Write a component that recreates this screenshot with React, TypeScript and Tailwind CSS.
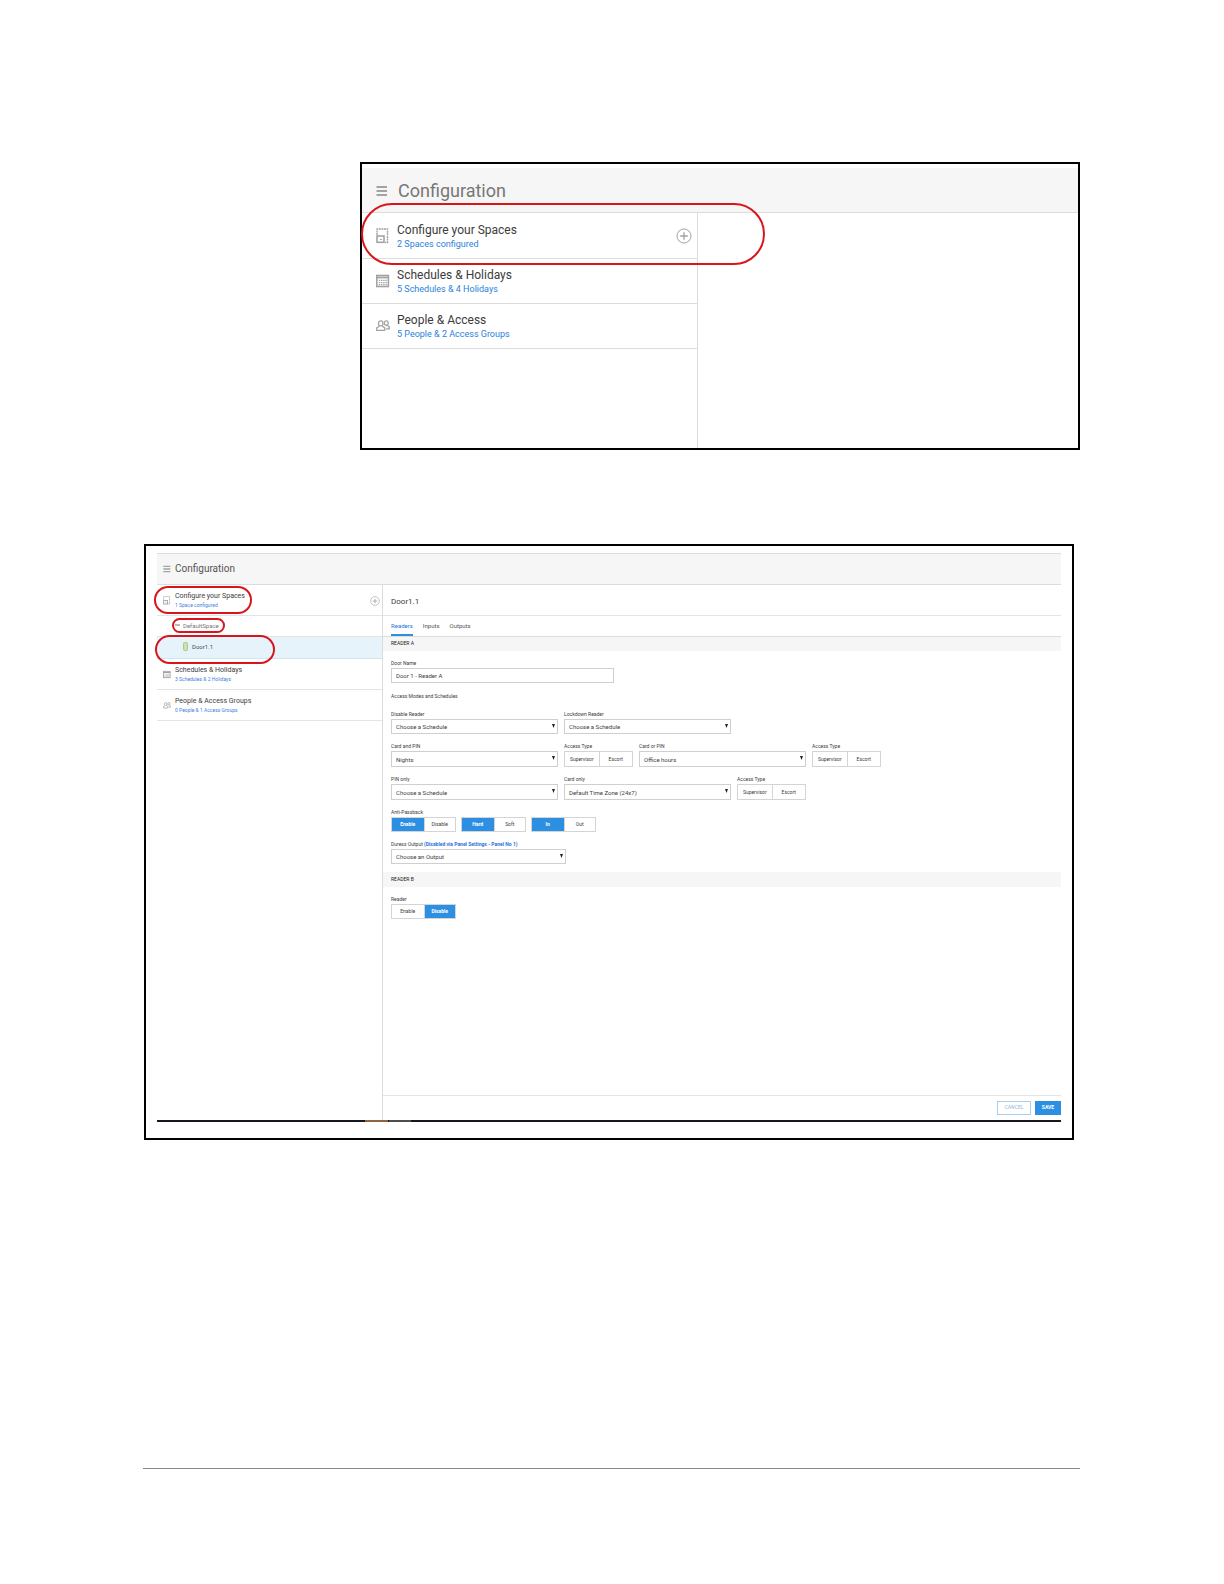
import type { ReactNode } from "react";
import clsx from "clsx";

const SPACES = [
  { title: "Configure your Spaces", detail: "2 Spaces configured", icon: "spaces" },
  { title: "Schedules & Holidays", detail: "5 Schedules & 4 Holidays", icon: "calendar" },
  { title: "People & Access", detail: "5 People & 2 Access Groups", icon: "people" },
];

function SectionIcon({ name, className }: { name: string; className: string }) {
  if (name === "spaces") {
    return (
      <svg viewBox="0 0 14 16" className={className} fill="none" stroke="currentColor" aria-hidden="true">
        <path d="M1 7V1H11.5V14.5H9" strokeDasharray="2 .6" strokeWidth="1.4" />
        <rect x="1" y="8" width="7" height="6.3" strokeWidth="1.6" />
        <path d="M4 11.5h2" />
      </svg>
    );
  }
  if (name === "calendar") {
    return (
      <svg viewBox="0 0 14 14" className={className} fill="none" stroke="currentColor" aria-hidden="true">
        <rect x=".8" y="1.5" width="11.6" height="11" strokeWidth="1.6" />
        <path d="M1 3.5h11.5" strokeWidth="1.8" />
        <path d="M2.8 6.4h8M2.8 8.6h8M2.8 10.6h8" strokeDasharray="1.4 .8" strokeWidth="1.2" />
      </svg>
    );
  }
  return (
    <svg viewBox="0 0 15 14" className={className} fill="none" stroke="currentColor" strokeWidth="1.4" aria-hidden="true">
      <rect x="2.8" y="1.6" width="4.6" height="5.2" rx="2" />
      <path d="M3.6 7.2.8 9v2.6h8.6V9L6.8 7.2" />
      <rect x="9" y="1.6" width="4" height="4.6" rx="1.8" />
      <path d="M12.2 6.4 14.2 8v2h-3.6" />
    </svg>
  );
}

function PlusIcon({ className }: { className: string }) {
  return (
    <svg viewBox="0 0 16 16" className={className} fill="none" stroke="currentColor" aria-hidden="true">
      <circle cx="8" cy="8" r="7" />
      <path d="M8 4.2v7.6M4.2 8h7.6" strokeWidth="1.3" />
    </svg>
  );
}

function MenuIcon({ className }: { className: string }) {
  return (
    <svg viewBox="0 0 12 12" className={className} stroke="currentColor" strokeWidth="2" aria-hidden="true">
      <path d="M.5 2h10.5M.5 6h10.5M.5 10h10.5" />
    </svg>
  );
}

// Red outline laid over the part of the screen that the step refers to
function Callout({ className }: { className: string }) {
  return (
    <span
      className={clsx("absolute rounded-full border-2 border-[#d8151b] pointer-events-none", className)}
      aria-hidden="true"
    />
  );
}

function OverviewFigure() {
  return (
    <figure className="ml-[217px] h-[288px] border-2 border-black pt-1 flex flex-col">
      <header className="h-[45px] shrink-0 bg-[#f6f6f6] border-b border-[#dcdcdc] flex items-center gap-2.5 pl-3.5 pt-0.5">
        <button type="button" aria-label="Menu" className="text-[#a3a3a3]">
          <MenuIcon className="size-3" />
        </button>
        <h1 className="text-[18px] leading-6 text-[#777]">Configuration</h1>
      </header>
      <div className="flex grow">
        <nav className="relative w-[336px] shrink-0 border-r border-[#dcdcdc] pt-px">
          <ul>
            {SPACES.map((item, i) => (
              <li
                key={item.title}
                className="h-[45px] border-b border-[#dcdcdc] flex items-center pl-3.5 pr-[5px]"
              >
                <SectionIcon name={item.icon} className="w-3.5 h-4 mr-[7px] text-[#a3a3a3]" />
                <a href="#" className="grow">
                  <span className="block text-[12px] leading-4 text-[#3c3c3c]">{item.title}</span>
                  <span className="block text-[9px] leading-3 text-[#2b82d9]">{item.detail}</span>
                </a>
                {i === 0 && (
                  <button type="button" aria-label="Add space" className="text-[#a3a3a3]">
                    <PlusIcon className="size-4" />
                  </button>
                )}
              </li>
            ))}
          </ul>
          <Callout className="-left-px -top-2.5 w-[404px] h-[62px]" />
        </nav>
      </div>
    </figure>
  );
}

function NavItem({ title, detail, icon, children }: { title: string; detail: string; icon: string; children?: ReactNode }) {
  return (
    <div className="relative h-[31px] border-b border-[#e4e4e4] flex items-center pl-1.5 pr-0.5 pt-px">
      <SectionIcon name={icon} className="w-2 h-[9px] mr-1 text-[#a3a3a3]" />
      <a href="#" className="grow">
        <span className="block text-[7px] leading-[10px] text-[#3c3c3c]">{title}</span>
        <span className="block text-[5px] leading-[9px] text-[#3f7fe0]">{detail}</span>
      </a>
      {children}
    </div>
  );
}

function Field({ id, label, children }: { id: string; label: ReactNode; children: ReactNode }) {
  return (
    <div>
      <label htmlFor={id} className="block text-[5px] leading-[10px] text-[#3c3c3c]">
        {label}
      </label>
      {children}
    </div>
  );
}

function SelectBox({ id, value, className }: { id: string; value: string; className: string }) {
  return (
    <div className={clsx("relative", className)}>
      <select
        id={id}
        className="block size-full appearance-none border border-[#cfcfcf] bg-white pl-1 pr-3 text-[6px] text-[#3c3c3c]"
      >
        <option>{value}</option>
      </select>
      <svg viewBox="0 0 3 4" className="absolute right-[3px] top-[5px] w-[3px] h-1 pointer-events-none" aria-hidden="true">
        <path d="M0 0h3L1.5 4z" fill="#222" />
      </svg>
    </div>
  );
}

function Toggle({ options, active, className }: { options: string[]; active?: string; className: string }) {
  return (
    <div className={clsx("flex border border-[#d4d4d4]", className)}>
      {options.map((option, i) => (
        <button
          key={option}
          type="button"
          aria-pressed={option === active}
          className={clsx(
            "grow basis-6 text-[5px] leading-none",
            option === active ? "bg-[#2d8fe2] text-white font-bold" : "text-[#3c3c3c]",
            option === "Supervisor" && "px-1",
            i > 0 && "border-l border-[#d4d4d4]"
          )}
        >
          {option}
        </button>
      ))}
    </div>
  );
}

function AccessType() {
  return (
    <div role="group" aria-label="Access Type">
      <p className="text-[5px] leading-[10px] text-[#3c3c3c]">Access Type</p>
      <Toggle options={["Supervisor", "Escort"]} className="w-[69px] h-4" />
    </div>
  );
}

function ReaderForm() {
  return (
    <form className="grow flex flex-col" onSubmit={(e) => e.preventDefault()}>
      <h3 className="h-3.5 bg-[#f6f6f6] pl-2 text-[5px] leading-[13px] text-[#222]">READER A</h3>
      <div className="pl-2 pt-[7px] pb-2 flex flex-col gap-[7px]">
        <Field id="door-name" label="Door Name">
          <input
            id="door-name"
            defaultValue="Door 1 - Reader A"
            className="block w-[223px] h-[15px] border border-[#cfcfcf] px-1 text-[6px] text-[#3c3c3c]"
          />
        </Field>
        <h4 className="text-[5px] leading-[12px] text-[#3c3c3c]">Access Modes and Schedules</h4>
        <div className="flex gap-1.5">
          <Field id="disable-reader" label="Disable Reader">
            <SelectBox id="disable-reader" value="Choose a Schedule" className="w-[167px] h-[15px]" />
          </Field>
          <Field id="lockdown-reader" label="Lockdown Reader">
            <SelectBox id="lockdown-reader" value="Choose a Schedule" className="w-[167px] h-[15px]" />
          </Field>
        </div>
        <div className="flex gap-1.5">
          <Field id="card-and-pin" label="Card and PIN">
            <SelectBox id="card-and-pin" value="Nights" className="w-[167px] h-4" />
          </Field>
          <AccessType />
          <Field id="card-or-pin" label="Card or PIN">
            <SelectBox id="card-or-pin" value="Office hours" className="w-[167px] h-4" />
          </Field>
          <AccessType />
        </div>
        <div className="flex gap-1.5">
          <Field id="pin-only" label="PIN only">
            <SelectBox id="pin-only" value="Choose a Schedule" className="w-[167px] h-4" />
          </Field>
          <Field id="card-only" label="Card only">
            <SelectBox id="card-only" value="Default Time Zone (24x7)" className="w-[167px] h-4" />
          </Field>
          <AccessType />
        </div>
        <div role="group" aria-label="Anti-Passback">
          <p className="text-[5px] leading-[10px] text-[#3c3c3c]">Anti-Passback</p>
          <div className="flex gap-[5px]">
            <Toggle options={["Enable", "Disable"]} active="Enable" className="w-[65px] h-[15px]" />
            <Toggle options={["Hard", "Soft"]} active="Hard" className="w-[65px] h-[15px]" />
            <Toggle options={["In", "Out"]} active="In" className="w-[65px] h-[15px]" />
          </div>
        </div>
        <Field
          id="duress-output"
          label={
            <>
              Duress Output <span className="text-[#2b72d9] font-bold">(Disabled via Panel Settings - Panel No 1)</span>
            </>
          }
        >
          <SelectBox id="duress-output" value="Choose an Output" className="w-[175px] h-[15px]" />
        </Field>
      </div>
      <h3 className="h-[15px] bg-[#f6f6f6] pl-2 text-[5px] leading-[14px] text-[#222]">READER B</h3>
      <div role="group" aria-label="Reader" className="grow pl-2 pt-[7px]">
        <p className="text-[5px] leading-[10px] text-[#3c3c3c]">Reader</p>
        <Toggle options={["Enable", "Disable"]} active="Disable" className="w-[65px] h-[15px]" />
      </div>
      <div className="h-[25px] border-t border-[#e4e4e4] flex items-start justify-end gap-1 pt-[5px]">
        <button type="button" className="w-[34px] h-3.5 border border-[#a9cdee] text-[5px] text-[#8fb9de]">
          CANCEL
        </button>
        <button type="submit" className="w-[26px] h-3.5 bg-[#2d8fe2] text-[5px] font-bold text-white">
          SAVE
        </button>
      </div>
    </form>
  );
}

function DoorFigure() {
  return (
    <figure className="mt-[94px] mr-1.5 ml-px h-[596px] border-2 border-black px-[11px] pt-[7px] pb-4 flex flex-col">
      <header className="h-8 shrink-0 bg-[#f6f6f6] border-y border-[#dcdcdc] flex items-center gap-1 pl-1.5">
        <button type="button" aria-label="Menu" className="text-[#a3a3a3]">
          <MenuIcon className="size-2" />
        </button>
        <h2 className="text-[10px] leading-4 text-[#555]">Configuration</h2>
      </header>
      <div className="grow flex">
        <nav className="w-[226px] shrink-0 border-r border-[#dcdcdc]">
          <NavItem title="Configure your Spaces" detail="1 Space configured" icon="spaces">
            <button type="button" aria-label="Add space" className="text-[#a3a3a3]">
              <PlusIcon className="size-2.5" />
            </button>
            <Callout className="-left-[3px] top-px w-[98px] h-7" />
          </NavItem>
          <div className="relative h-[21px] border-b border-[#e4e4e4] flex items-center gap-[3px] pl-[18px] pb-0.5 text-[6px] text-[#777]">
            <svg viewBox="0 0 5 2" className="w-[5px] h-0.5" aria-hidden="true">
              <path d="M0 1h5" stroke="#777" />
            </svg>
            <a href="#">DefaultSpace</a>
            <Callout className="left-[15px] top-0.5 w-[53px] h-[15px]" />
          </div>
          <div className="relative h-[22px] border-b border-[#cfe5f0] bg-[#e6f3fa] flex items-center gap-1 pl-[26px] pb-0.5 text-[6px] text-[#4a4a4a]">
            <svg viewBox="0 0 5 9" className="w-[5px] h-[9px]" fill="none" stroke="#a5cf88" aria-hidden="true">
              <rect x=".5" y=".5" width="4" height="8" rx="1" fill="#c5e0b0" />
              <path d="M2.5 2v5" stroke="#eadfb0" />
            </svg>
            <a href="#">Door1.1</a>
            <Callout className="-left-0.5 -top-0.5 w-[120px] h-[29px]" />
          </div>
          <NavItem title="Schedules & Holidays" detail="3 Schedules & 2 Holidays" icon="calendar" />
          <NavItem title="People & Access Groups" detail="0 People & 1 Access Groups" icon="people" />
        </nav>
        <section className="grow flex flex-col">
          <h2 className="h-[31px] border-b border-[#e4e4e4] pl-2 pt-2 text-[8px] leading-[18px] text-[#3c3c3c]">Door1.1</h2>
          <div className="h-[21px] shrink-0 border-b border-[#dcdcdc] flex gap-2.5 pl-2 text-[6px] text-[#555]">
            <a href="#" className="text-[#2b72d9] border-b-2 border-[#2d8fe2] leading-5">Readers</a>
            <a href="#" className="leading-5">Inputs</a>
            <a href="#" className="leading-5">Outputs</a>
          </div>
          <ReaderForm />
        </section>
      </div>
      <div className="h-0.5 shrink-0 bg-[#15191f] flex pl-52">
        <span className="w-[23px] bg-[#8f6440]" />
        <span className="w-[22px] ml-px bg-[#4b4f52]" />
      </div>
    </figure>
  );
}

export default function App() {
  return (
    <main className="bg-white pt-[162px] pl-[143px] pr-36 min-h-screen font-['Roboto',sans-serif]">
      <OverviewFigure />
      <DoorFigure />
      <hr className="mt-[328px] border-[#8a8a8a]" />
    </main>
  );
}
